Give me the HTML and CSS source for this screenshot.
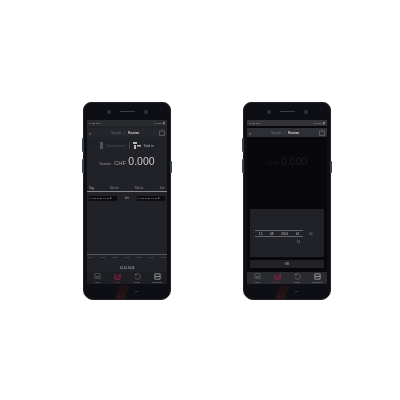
FILE: index.html
```html
<!DOCTYPE html>
<html lang="de">
<head>
<meta charset="utf-8">
<title>Phones</title>
<link rel="stylesheet" href="styles.css">
</head>
<body>
<main class="stage">
  <section class="phone">
    <span class="side side-a"></span><span class="side side-b"></span><span class="side side-c"></span>
    <div class="bezel-top"><span class="cam"></span><span class="speaker"></span><span class="sensor"></span></div>
    <div class="screen">
      <div class="status"><span>14:27 ▪ ▪ ▪</span><span>▪ ▪ 76% ▮</span></div>
      <header class="head">
        <span class="back">‹</span>
        <span class="crumb"><span class="dim">Google</span><span class="dim">/</span><b>Kosten</b></span>
        <svg class="share" viewBox="0 0 6 7"><path d="M.5 2h5v4.500h-5zM3 2V.3" fill="none" stroke="#777" stroke-width=".6"/></svg>
      </header>
      <div class="kinds">
        <span class="kind"><span class="tube"></span>Transaktionen</span>
        <span class="kind bright"><svg class="pump" viewBox="0 0 8 7"><path d="M0 0h4v2H0zM1 3h2v4H1zM4 3h4v1.500H4z" fill="#bbb"/></svg>Total in</span>
      </div>
      <div class="amount"><span class="label">Gesamt</span><span class="cur">CHF</span><span class="value">0.000</span></div>
      <nav class="tabs"><span class="on">Tag</span><span>Woche</span><span>Monat</span><span>Jahr</span></nav>
      <div class="rule"></div>
      <div class="range"><span class="field">04.10.2024 14:00 ▾</span><span class="bis">bis</span><span class="field">14.10.2024 14:00 ▾</span></div>
      <div class="chart">
        <div class="axis"><span>04:00</span><span>06:00</span><span>08:00</span><span>10:00</span><span>12:00</span><span>14:00</span><span>16:00</span></div>
        <div class="date">14.10.2024</div>
      </div>
      <footer class="nav">
        <span class="item"><svg viewBox="0 0 8 8"><path d="M1 7V3a3 3 0 0 1 6 0v4M3 7V4h2v3" fill="none" stroke="#777" stroke-width=".7"/></svg>Home</span>
        <span class="item red"><svg viewBox="0 0 8 8"><path d="M1 1v6h6V1M3 4l1 1 2-3" fill="none" stroke="#b01f40" stroke-width=".9"/></svg>Kosten</span>
        <span class="item"><svg viewBox="0 0 8 8"><path d="M1.500 2a3.200 3.200 0 1 1-.5 3M1.500 .5V2.500h2" fill="none" stroke="#777" stroke-width=".7"/></svg>Verlauf</span>
        <span class="item"><svg viewBox="0 0 8 8"><path d="M1 7V1h6v6zM1 4h6" fill="none" stroke="#aaa" stroke-width=".9"/></svg>Einstellung</span>
      </footer>
    </div>
    <div class="bezel-bottom"><span class="reflex"></span><span class="mark"></span></div>
  </section>

  <section class="phone">
    <span class="side side-a"></span><span class="side side-b"></span><span class="side side-c"></span>
    <div class="bezel-top"><span class="cam"></span><span class="speaker"></span><span class="sensor"></span></div>
    <div class="screen dark">
      <div class="status"><span>14:27 ▪ ▪ ▪</span><span>▪ ▪ 76% ▮</span></div>
      <header class="head">
        <span class="back">‹</span>
        <span class="crumb"><span class="dim">Google</span><span class="dim">/</span><b>Kosten</b></span>
        <svg class="share" viewBox="0 0 6 7"><path d="M.5 2h5v4.500h-5zM3 2V.3" fill="none" stroke="#777" stroke-width=".6"/></svg>
      </header>
      <div class="shade">
        <div class="ghost"><span class="cur">CHF</span><span class="value">0.000</span></div>
      </div>
      <div class="picker">
        <div class="wheel">
          <div class="picked"><span>15</span><span>08</span><span>2024</span><span>14</span></div>
          <span class="gap">30</span>
        </div>
        <div class="next">11</div>
      </div>
      <div class="ok">OK</div>
      <footer class="nav">
        <span class="item"><svg viewBox="0 0 8 8"><path d="M1 7V3a3 3 0 0 1 6 0v4M3 7V4h2v3" fill="none" stroke="#777" stroke-width=".7"/></svg>Home</span>
        <span class="item red"><svg viewBox="0 0 8 8"><path d="M1 1v6h6V1M3 4l1 1 2-3" fill="none" stroke="#b01f40" stroke-width=".9"/></svg>Kosten</span>
        <span class="item"><svg viewBox="0 0 8 8"><path d="M1.500 2a3.200 3.200 0 1 1-.5 3M1.500 .5V2.500h2" fill="none" stroke="#777" stroke-width=".7"/></svg>Verlauf</span>
        <span class="item"><svg viewBox="0 0 8 8"><path d="M1 7V1h6v6zM1 4h6" fill="none" stroke="#aaa" stroke-width=".9"/></svg>Einstellung</span>
      </footer>
    </div>
    <div class="bezel-bottom"><span class="reflex"></span><span class="mark"></span></div>
  </section>
</main>
</body>
</html>
```

FILE: styles.css
```css
* { box-sizing: border-box; }
html, body { margin: 0; height: 100%; background: #fff; }
body { font-family: "Liberation Sans", Arial, sans-serif; overflow: hidden; }
.stage { width: 400px; height: 400px; display: flex; gap: 72px; padding: 102px 0 0 83px; align-items: flex-start; }
.phone { position: relative; width: 88px; height: 198px; background: #0e0f15; border-radius: 8px 8px 10px 10px; border: 1px solid #20222b; padding: 0 3px; display: flex; flex-direction: column; filter: blur(.3px); }
.side { position: absolute; width: 2px; background: #3c3f4c; }
.side-a { left: -2px; top: 35px; height: 14px; border-radius: 1px 0 0 1px; }
.side-b { left: -2px; top: 56px; height: 14px; border-radius: 1px 0 0 1px; }
.side-c { right: -2px; top: 58px; height: 12px; border-radius: 0 1px 1px 0; }
.bezel-top { height: 17px; flex: none; display: flex; align-items: center; justify-content: center; gap: 9px; }
.cam, .sensor { width: 4px; height: 4px; border-radius: 50%; background: #33353d; }
.speaker { width: 15px; height: 1px; background: #3a3c44; }
.screen { flex: 1; min-height: 0; background: #212227; display: flex; flex-direction: column; font-size: 3px; color: #85868b; }
.status { height: 6px; flex: none; background: #2a2b2f; color: #aaaaad; display: flex; justify-content: space-between; align-items: center; padding: 0 2px; font-size: 2.500px; }
.head { height: 9px; margin-top: 2px; flex: none; display: flex; align-items: center; justify-content: space-between; padding: 0 2px; background: #25262b; }
.back { font-size: 6px; color: #aaa; line-height: 1; }
.crumb { display: flex; gap: 3px; font-size: 3.300px; }
.crumb b { color: #d8d8d8; }
.dim { color: #6c6d72; }
.share { width: 6px; height: 7px; }
.kinds { display: flex; gap: 4px; justify-content: center; align-items: center; height: 13px; margin-top: 2px; flex: none; }
.kind { display: flex; align-items: center; gap: 2px; color: #505156; font-size: 3.200px; }
.kind.bright { color: #bbbbbe; border-left: 1px solid #45464b; padding-left: 3px; }
.tube { width: 3px; height: 7px; background: #505156; }
.pump { width: 8px; height: 7px; }
.amount { display: flex; align-items: baseline; justify-content: center; gap: 2px; height: 15px; margin-top: 2px; flex: none; }
.label { font-size: 3.300px; color: #9a9a9d; margin-right: 1px; }
.cur { font-size: 6px; color: #9a9a9d; }
.value { font-size: 10.500px; color: #c9c9cc; line-height: 15px; }
.tabs { display: flex; justify-content: space-between; margin-top: 16px; padding: 0 2px; font-size: 3px; flex: none; height: 5px; align-items: center; }
.tabs .on { color: #bbb; }
.rule { height: 1px; background: #86878b; flex: none; margin-top: 1px; }
.range { display: flex; justify-content: space-between; align-items: center; padding: 0 2px; margin-top: 3px; flex: none; height: 6px; }
.field { background: #0c0c0e; color: #b5b5b8; font-size: 2.500px; padding: 0 1px; height: 5px; line-height: 5px; width: 28px; white-space: nowrap; overflow: hidden; }
.bis { color: #a0a0a3; }
.chart { flex: 1; display: flex; flex-direction: column; justify-content: flex-end; min-height: 0; }
.axis { border-top: 1px solid #55565b; display: flex; justify-content: space-between; padding: 1px 1px 0; font-size: 2px; color: #77787c; margin-bottom: 8px; }
.date { text-align: center; color: #bdbdc0; font-size: 3px; height: 5px; line-height: 5px; margin-bottom: 1px; }
.nav { height: 12px; flex: none; background: #1d1e23; display: flex; justify-content: space-around; align-items: center; font-size: 2px; color: #9a9a9d; }
.item { display: flex; flex-direction: column; align-items: center; width: 18px; line-height: 2px; gap: 1px; }
.item svg { width: 7px; height: 7px; }
.red { color: #a5233e; }
.bezel-bottom { flex: none; height: 15px; display: flex; justify-content: center; align-items: flex-end; position: relative; }
.reflex { width: 9px; height: 14px; background: linear-gradient(#1a0f12, #2b1519); transform: skewX(-20deg); margin-right: 10px; }
.mark { position: absolute; left: 48px; top: 7px; width: 3px; height: 1px; background: #34353a; }
.screen.dark { background: #08080a; }
.dark .status { background: #333439; }
.dark .head { background: #2e2f34; }
.dark .nav { background: #292a2f; }
.shade { flex: 1; min-height: 0; display: flex; justify-content: center; padding-top: 17px; }
.ghost { display: flex; align-items: baseline; gap: 2px; opacity: .1; height: 15px; }
.picker { height: 48px; flex: none; margin: 0 3px; background: #212227; padding: 21px 5px 0; display: flex; flex-direction: column; }
.wheel { display: flex; align-items: center; gap: 6px; }
.picked { width: 48px; display: flex; justify-content: space-between; align-items: center; height: 7px; padding: 0 4px; border-top: 1px solid #63646a; border-bottom: 1px solid #63646a; color: #c0c0c3; font-size: 3px; }
.gap { color: #7f8084; }
.next { width: 48px; text-align: right; padding-right: 3px; margin-top: 3px; color: #9a9a9d; font-size: 3px; }
.ok { height: 8px; flex: none; margin: 3px 3px 4px; background: #212227; color: #c5c5c8; text-align: center; font-size: 3px; line-height: 8px; }
```
